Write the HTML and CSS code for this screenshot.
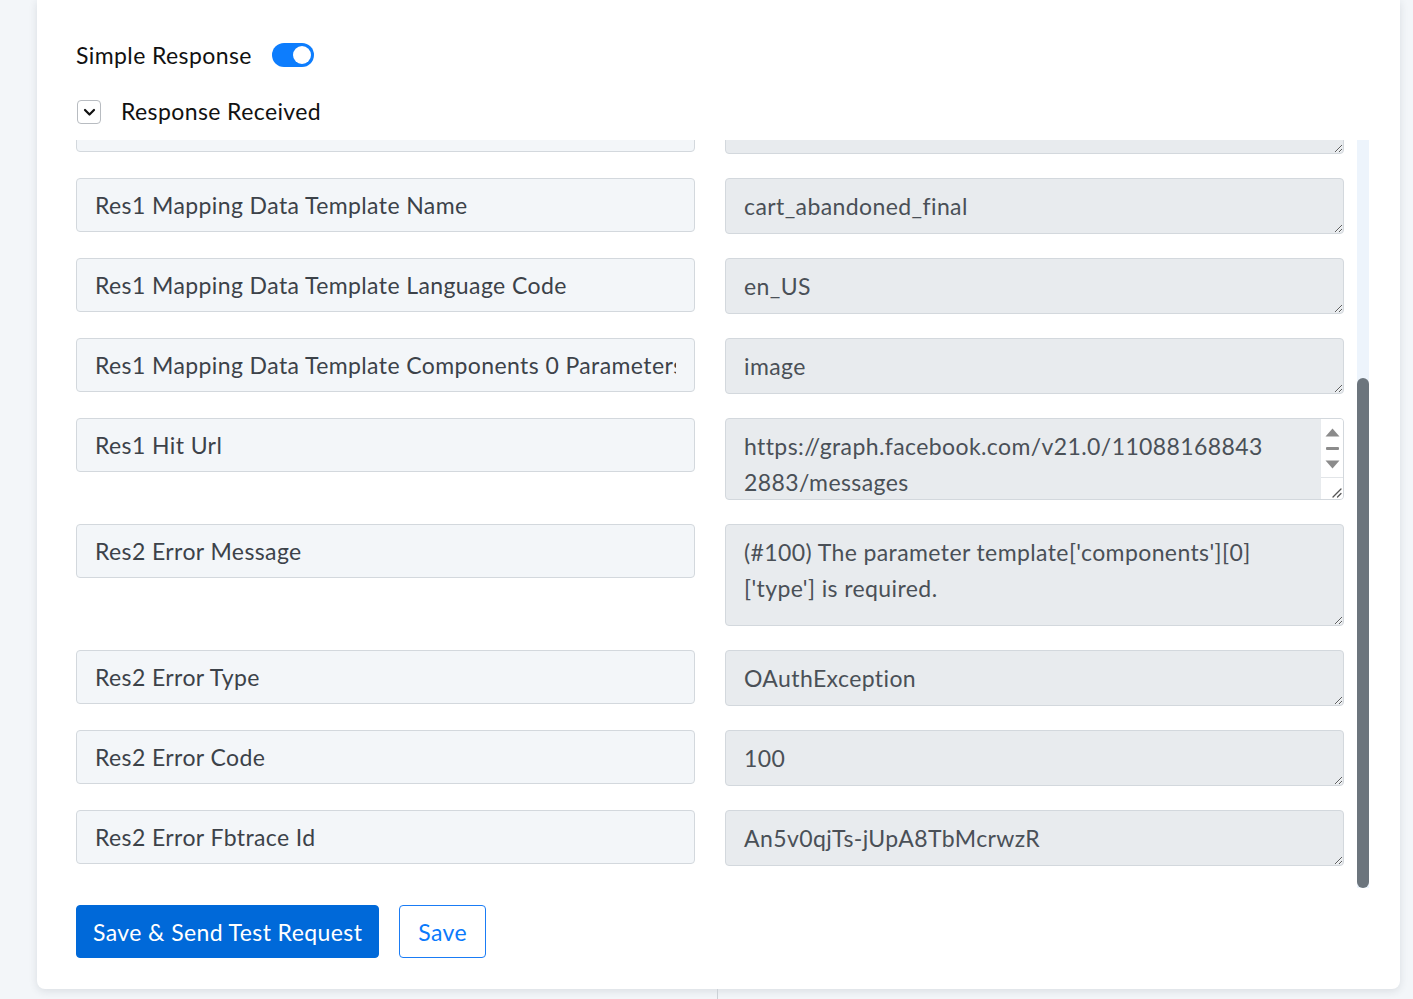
FILE: index.html
```html
<!DOCTYPE html>
<html lang="en">
<head>
    <meta charset="UTF-8">
    <meta name="viewport" content="width=device-width, initial-scale=1.0">
    <title>Response Received</title>
    <link rel="stylesheet" href="styles.css">
</head>
<body>

<div class="card">
    <div class="switch-row">
        <span>Simple Response</span>
        <span class="toggle"><span class="knob"></span></span>
    </div>

    <div class="section-head">
        <span class="chevron">
            <svg width="13" height="9" viewBox="0 0 13 9"><path d="M2 2l4.5 4.5L11 2" fill="none" stroke="#111" stroke-width="2.2" stroke-linecap="round" stroke-linejoin="round"/></svg>
        </span>
        <span>Response Received</span>
    </div>

    <div class="scroll-wrap">
        <div class="scroll-area" id="responseList">
            <div class="fields">
                <input class="key" type="text" value="Res1 Messaging Product" readonly>
                <textarea class="val" readonly>whatsapp</textarea>

                <input class="key" type="text" value="Res1 Contacts 0 Input" readonly>
                <textarea class="val two-line" readonly>+91 98765 43210</textarea>

                <input class="key" type="text" value="Res1 Mapping Data To" readonly>
                <textarea class="val" readonly>919876543210</textarea>

                <input class="key" type="text" value="Res1 Mapping Data Type" readonly>
                <textarea class="val" readonly>template</textarea>

                <input class="key" type="text" value="Res1 Mapping Data Template Name" readonly>
                <textarea class="val" readonly>cart_abandoned_final</textarea>

                <input class="key" type="text" value="Res1 Mapping Data Template Language Code" readonly>
                <textarea class="val" readonly>en_US</textarea>

                <input class="key" type="text" value="Res1 Mapping Data Template Components 0 Parameters 0 Type" readonly>
                <textarea class="val" readonly>image</textarea>

                <input class="key" type="text" value="Res1 Hit Url" readonly>
                <div class="url-box">
                    <textarea class="val url" readonly>https://graph.facebook.com/v21.0/110881688432883/messages</textarea>
                    <div class="mini-bar">
                        <div class="mini-track">
                            <svg width="15" height="9" viewBox="0 0 15 9"><path d="M7.5 0.5L14.5 8.5H0.5z" fill="#8b8b8b"/></svg>
                            <span class="mini-thumb"></span>
                            <svg width="15" height="9" viewBox="0 0 15 9"><path d="M0.5 0.5H14.5L7.5 8.5z" fill="#8b8b8b"/></svg>
                        </div>
                        <div class="mini-corner">
                            <svg width="11" height="11" viewBox="0 0 11 11"><path d="M10 2L2 10M10 6.5L6.5 10" stroke="#555" stroke-width="1.3" stroke-linecap="round"/></svg>
                        </div>
                    </div>
                </div>

                <input class="key" type="text" value="Res2 Error Message" readonly>
                <textarea class="val two-line" readonly>(#100) The parameter template['components'][0]['type'] is required.</textarea>

                <input class="key" type="text" value="Res2 Error Type" readonly>
                <textarea class="val" readonly>OAuthException</textarea>

                <input class="key" type="text" value="Res2 Error Code" readonly>
                <textarea class="val" readonly>100</textarea>

                <input class="key" type="text" value="Res2 Error Fbtrace Id" readonly>
                <textarea class="val" readonly>An5v0qjTs-jUpA8TbMcrwzR</textarea>
            </div>
        </div>
        <div class="scrollbar"><div class="thumb"></div></div>
    </div>

    <div class="actions">
        <button class="btn btn-primary">Save &amp; Send Test Request</button>
        <button class="btn btn-outline">Save</button>
    </div>
</div>

<div class="below">
    <div class="divider"></div>
</div>

<script>
    // keep the list scrolled to the last response fields
    let list = document.getElementById("responseList");
    list.scrollTop = list.scrollHeight;
</script>

</body>
</html>
```

FILE: styles.css
```css
body {
    margin: 0;
    font-family: "Lato", "Liberation Sans", sans-serif;
    letter-spacing: 0.4px;
    background-color: #f3f6f9;
    color: #111;
}
.card {
    margin-left: 37px;
    width: 1363px;
    box-sizing: border-box;
    padding: 36px 31px 31px 39px;
    background-color: #fff;
    border-radius: 0 0 8px 8px;
    box-shadow: 0 2px 8px rgba(30, 45, 60, 0.12);
}
.switch-row {
    display: flex;
    align-items: center;
    gap: 20px;
    font-size: 23px;
    height: 38px;
}
.toggle {
    position: relative;
    width: 42px;
    height: 24px;
    border-radius: 12px;
    background-color: #0d7dfd;
}
.toggle .knob {
    position: absolute;
    top: 3px;
    right: 3px;
    width: 18px;
    height: 18px;
    border-radius: 50%;
    background-color: #fff;
}
.section-head {
    display: flex;
    align-items: center;
    gap: 20px;
    font-size: 23px;
    margin-top: 18px;
    height: 38px;
}
.chevron {
    display: flex;
    align-items: center;
    justify-content: center;
    width: 22px;
    height: 22px;
    margin-top: 2px;
    border: 1px solid #b8bcc1;
    border-radius: 4px;
    margin-left: 1px;
}
.scroll-wrap {
    display: flex;
    height: 748px;
    margin-top: 10px;
}
.scroll-area {
    flex: 1;
    overflow: hidden;
}
.scrollbar {
    width: 12px;
    background-color: #edf4fc;
}
.scrollbar .thumb {
    margin-top: 238px;
    height: 510px;
    border-radius: 6px;
    background-color: #6c757d;
}
.fields {
    display: grid;
    grid-template-columns: 1fr 1fr;
    column-gap: 30px;
    row-gap: 24px;
    align-items: start;
    padding: 21px 13px 22px 0;
}
.key,
.val {
    display: block;
    box-sizing: border-box;
    width: 100%;
    margin: 0;
    font-family: "Lato", "Liberation Sans", sans-serif;
    font-size: 23px;
    letter-spacing: 0.4px;
    border: 1px solid #d3d8dd;
    border-radius: 4px;
    outline: none;
}
.key {
    height: 54px;
    padding: 0 18px;
    background-color: #f3f6f9;
    color: #3c4249;
}
.val {
    height: 56px;
    padding: 9px 28px 9px 18px;
    line-height: 36px;
    background-color: #e8ebee;
    color: #4a5057;
    resize: vertical;
}
.val.two-line {
    height: 102px;
}
.url-box {
    position: relative;
}
.val.url {
    height: 82px;
    padding-right: 73px;
    overflow: hidden;
}
.mini-bar {
    position: absolute;
    top: 1px;
    right: 1px;
    bottom: 1px;
    width: 22px;
    display: flex;
    flex-direction: column;
    background-color: #fff;
    border-top-right-radius: 3px;
    border-bottom-right-radius: 3px;
}
.mini-track {
    flex: 1;
    display: flex;
    flex-direction: column;
    align-items: center;
    padding-top: 9px;
    gap: 10px;
}
.mini-thumb {
    width: 13px;
    height: 3px;
    border-radius: 1px;
    background-color: #8b8b8b;
}
.mini-corner {
    height: 22px;
    display: flex;
    align-items: flex-end;
    justify-content: flex-end;
    padding: 0 1px 1px 0;
    border-top: 1px solid #e2e5e8;
    box-sizing: border-box;
}
.actions {
    display: flex;
    gap: 20px;
    margin-top: 17px;
}
.btn {
    height: 53px;
    padding: 0 16px;
    font-family: "Lato", "Liberation Sans", sans-serif;
    font-size: 23px;
    letter-spacing: 0.4px;
    border-radius: 4px;
    cursor: pointer;
}
.btn-primary {
    background-color: #0069d9;
    border: 1px solid #0069d9;
    color: #fff;
}
.btn-outline {
    padding: 0 18px;
    background-color: #fff;
    border: 1px solid #1a7cf5;
    color: #0a7afc;
}
.below {
    height: 40px;
}
.divider {
    margin-left: 717px;
    width: 1px;
    height: 40px;
    background-color: #ccd1d6;
}
```
